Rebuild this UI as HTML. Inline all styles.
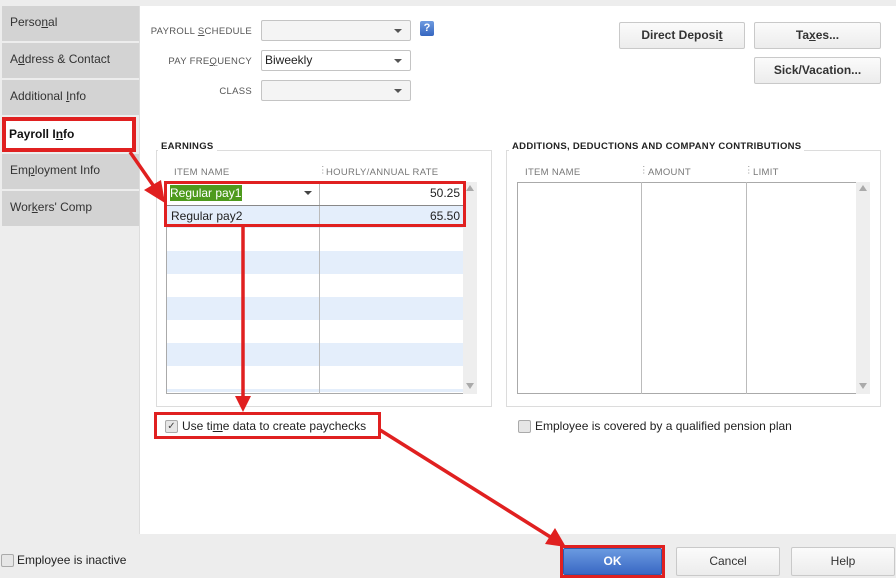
<!DOCTYPE html>
<html><head><style>
body{margin:0;width:896px;height:578px;background:#ededed;font-family:"Liberation Sans",sans-serif;position:relative;overflow:hidden;font-size:12px;color:#222}
.a{position:absolute;white-space:nowrap}
.tab{position:absolute;left:2px;width:137px;height:35px;background:#d3d3d3;font-size:12px;color:#333;line-height:33px;padding-left:8px;box-sizing:border-box}
.lbl{position:absolute;font-size:9.5px;color:#555;text-align:right;letter-spacing:.3px}
.sel{position:absolute;height:21px;border:1px solid #c4c4c4;border-radius:2px;background:#f4f4f4;box-sizing:border-box}
.sel:after{content:"";position:absolute;right:8px;top:8px;border:4px solid transparent;border-top:4px solid #555;border-bottom:0}
.btn{position:absolute;height:27px;border:1px solid #c9c9c9;border-radius:2px;background:linear-gradient(#fbfbfb,#ececec);box-sizing:border-box;text-align:center;line-height:25px;font-size:12px;font-weight:bold;color:#333}
.fs{position:absolute;border:1px solid #dcdcdc;box-sizing:border-box}
.leg{position:absolute;background:#fff;font-size:9.5px;font-weight:bold;color:#222;padding:0 3px;letter-spacing:.3px}
.th{position:absolute;font-size:9.5px;color:#777;letter-spacing:.3px}
.cb{position:absolute;width:11px;height:11px;border:1px solid #aaa;border-radius:2px;background:#e6e6e6}
</style></head><body>
<div class="a" style="left:139px;top:6px;width:757px;height:528px;background:#fff;border-left:1px solid #ddd"></div>
<div class="tab" style="top:6px">Perso<u>n</u>al</div>
<div class="tab" style="top:43px">A<u>d</u>dress &amp; Contact</div>
<div class="tab" style="top:80px">Additional <u>I</u>nfo</div>
<div class="tab" style="top:117px;background:#fff;border:4px solid #e02020;width:134px;font-weight:bold;color:#111;padding-left:3px;line-height:26px">Payroll I<u>n</u>fo</div>
<div class="tab" style="top:154px">Em<u>p</u>loyment Info</div>
<div class="tab" style="top:191px">Wor<u>k</u>ers' Comp</div>

<div class="lbl" style="left:150px;top:26px;width:102px">PAYROLL <u>S</u>CHEDULE</div>
<div class="lbl" style="left:150px;top:56px;width:102px">PAY FRE<u>Q</u>UENCY</div>
<div class="lbl" style="left:150px;top:86px;width:102px">CLASS</div>
<div class="sel" style="left:261px;top:20px;width:150px"></div>
<div class="sel" style="left:261px;top:50px;width:150px;background:#fff;font-size:12px;line-height:19px;padding-left:3px">Biweekly</div>
<div class="sel" style="left:261px;top:80px;width:150px"></div>
<div class="a" style="left:420px;top:21px;width:14px;height:15px;background:linear-gradient(#6f9be0,#3566c0);border-radius:2px;color:#fff;font-size:11px;text-align:center;line-height:15px;font-weight:bold">?</div>

<div class="btn" style="left:619px;top:22px;width:126px">Direct Deposi<u>t</u></div>
<div class="btn" style="left:754px;top:22px;width:127px">Ta<u>x</u>es...</div>
<div class="btn" style="left:754px;top:57px;width:127px">Sick/Vacation...</div>

<div class="fs" style="left:156px;top:150px;width:336px;height:257px"></div>
<div class="leg" style="left:158px;top:141px">EARNINGS</div>
<div class="th" style="left:174px;top:167px">ITEM NAME</div>
<div class="th" style="left:318px;top:165px;color:#999">⋮</div>
<div class="th" style="left:326px;top:167px">HOURLY/ANNUAL RATE</div>
<div class="a" style="left:166px;top:182px;width:298px;height:212px;border:1px solid #aaa;box-sizing:border-box;background:repeating-linear-gradient(#fff 0 23px,#e4eefb 23px 46px);background-position:0 -1px"></div>
<div class="a" style="left:319px;top:182px;width:1px;height:212px;background:#bbb"></div>
<div class="a" style="left:463px;top:182px;width:14px;height:212px;background:#eee"></div>
<div class="a" style="left:466px;top:185px;border:4px solid transparent;border-bottom:6px solid #aaa;border-top:0"></div>
<div class="a" style="left:466px;top:383px;border:4px solid transparent;border-top:6px solid #aaa;border-bottom:0"></div>
<div class="a" style="left:167px;top:183px;width:296px;height:22px;background:#fff;border-bottom:1px solid #999"></div>
<div class="a" style="left:319px;top:183px;width:1px;height:45px;background:#bbb"></div>
<div class="a" style="left:170px;top:185px;padding-right:1px;height:16px;background:#4e9a1c;color:#fff;font-size:12px;line-height:16px">Regular pay1</div>
<div class="a" style="left:304px;top:191px;border:4px solid transparent;border-top:4px solid #444;border-bottom:0"></div>
<div class="a" style="left:400px;top:186px;width:60px;text-align:right;font-size:12px">50.25</div>
<div class="a" style="left:167px;top:206px;width:296px;height:22px;background:#e4eefb"></div>
<div class="a" style="left:319px;top:206px;width:1px;height:22px;background:#bbb"></div>
<div class="a" style="left:171px;top:209px;font-size:12px">Regular pay2</div>
<div class="a" style="left:400px;top:209px;width:60px;text-align:right;font-size:12px">65.50</div>
<div class="a" style="left:164px;top:181px;width:302px;height:46px;border:3px solid #e02020;box-sizing:border-box"></div>
<div class="a" style="left:167px;top:205px;width:296px;height:1px;background:#888"></div>

<div class="fs" style="left:506px;top:150px;width:375px;height:257px"></div>
<div class="leg" style="left:509px;top:141px">ADDITIONS, DEDUCTIONS AND COMPANY CONTRIBUTIONS</div>
<div class="th" style="left:525px;top:167px">ITEM NAME</div>
<div class="th" style="left:639px;top:165px;color:#999">⋮</div>
<div class="th" style="left:648px;top:167px">AMOUNT</div>
<div class="th" style="left:744px;top:165px;color:#999">⋮</div>
<div class="th" style="left:753px;top:167px">LIMIT</div>
<div class="a" style="left:517px;top:182px;width:340px;height:212px;border:1px solid #aaa;box-sizing:border-box;background:#fff"></div>
<div class="a" style="left:641px;top:182px;width:1px;height:212px;background:#bbb"></div>
<div class="a" style="left:746px;top:182px;width:1px;height:212px;background:#bbb"></div>
<div class="a" style="left:856px;top:182px;width:14px;height:212px;background:#eee"></div>
<div class="a" style="left:859px;top:185px;border:4px solid transparent;border-bottom:6px solid #aaa;border-top:0"></div>
<div class="a" style="left:859px;top:383px;border:4px solid transparent;border-top:6px solid #aaa;border-bottom:0"></div>

<div class="a" style="left:154px;top:412px;width:227px;height:27px;border:3px solid #e02020;box-sizing:border-box"></div>
<div class="cb" style="left:165px;top:420px;font-size:10px;line-height:11px;text-align:center;color:#444">✓</div>
<div class="a" style="left:182px;top:419px;font-size:12px">Use ti<u>m</u>e data to create paychecks</div>
<div class="cb" style="left:518px;top:420px"></div>
<div class="a" style="left:535px;top:419px;font-size:12px">Employee is covered by a qualified pension plan</div>

<div class="cb" style="left:1px;top:554px"></div>
<div class="a" style="left:17px;top:553px;font-size:12px">Employee is inactive</div>
<div class="a" style="left:560px;top:545px;width:105px;height:33px;border:3px solid #e02020;box-sizing:border-box"></div>
<div class="btn" style="left:563px;top:548px;width:99px;height:27px;background:linear-gradient(#6a9ae0,#3a68c4);border-color:#2e5aad;color:#fff">OK</div>
<div class="btn" style="left:676px;top:547px;width:104px;height:29px;font-weight:normal;line-height:27px">Cancel</div>
<div class="btn" style="left:791px;top:547px;width:104px;height:29px;font-weight:normal;line-height:27px">Help</div>

<svg class="a" style="left:0;top:0" width="896" height="578">
<g stroke="#e02020" stroke-width="3.5" fill="#e02020">
<line x1="130" y1="152" x2="155" y2="188"/>
<polygon points="165,203 144,190 161,180" stroke="none"/>
<line x1="243" y1="226" x2="243" y2="398"/>
<polygon points="243,412 235,396 251,396" stroke="none"/>
<line x1="380" y1="430" x2="552" y2="538"/>
<polygon points="566,547 545,544 555,528" stroke="none"/>
</g></svg>
</body></html>
